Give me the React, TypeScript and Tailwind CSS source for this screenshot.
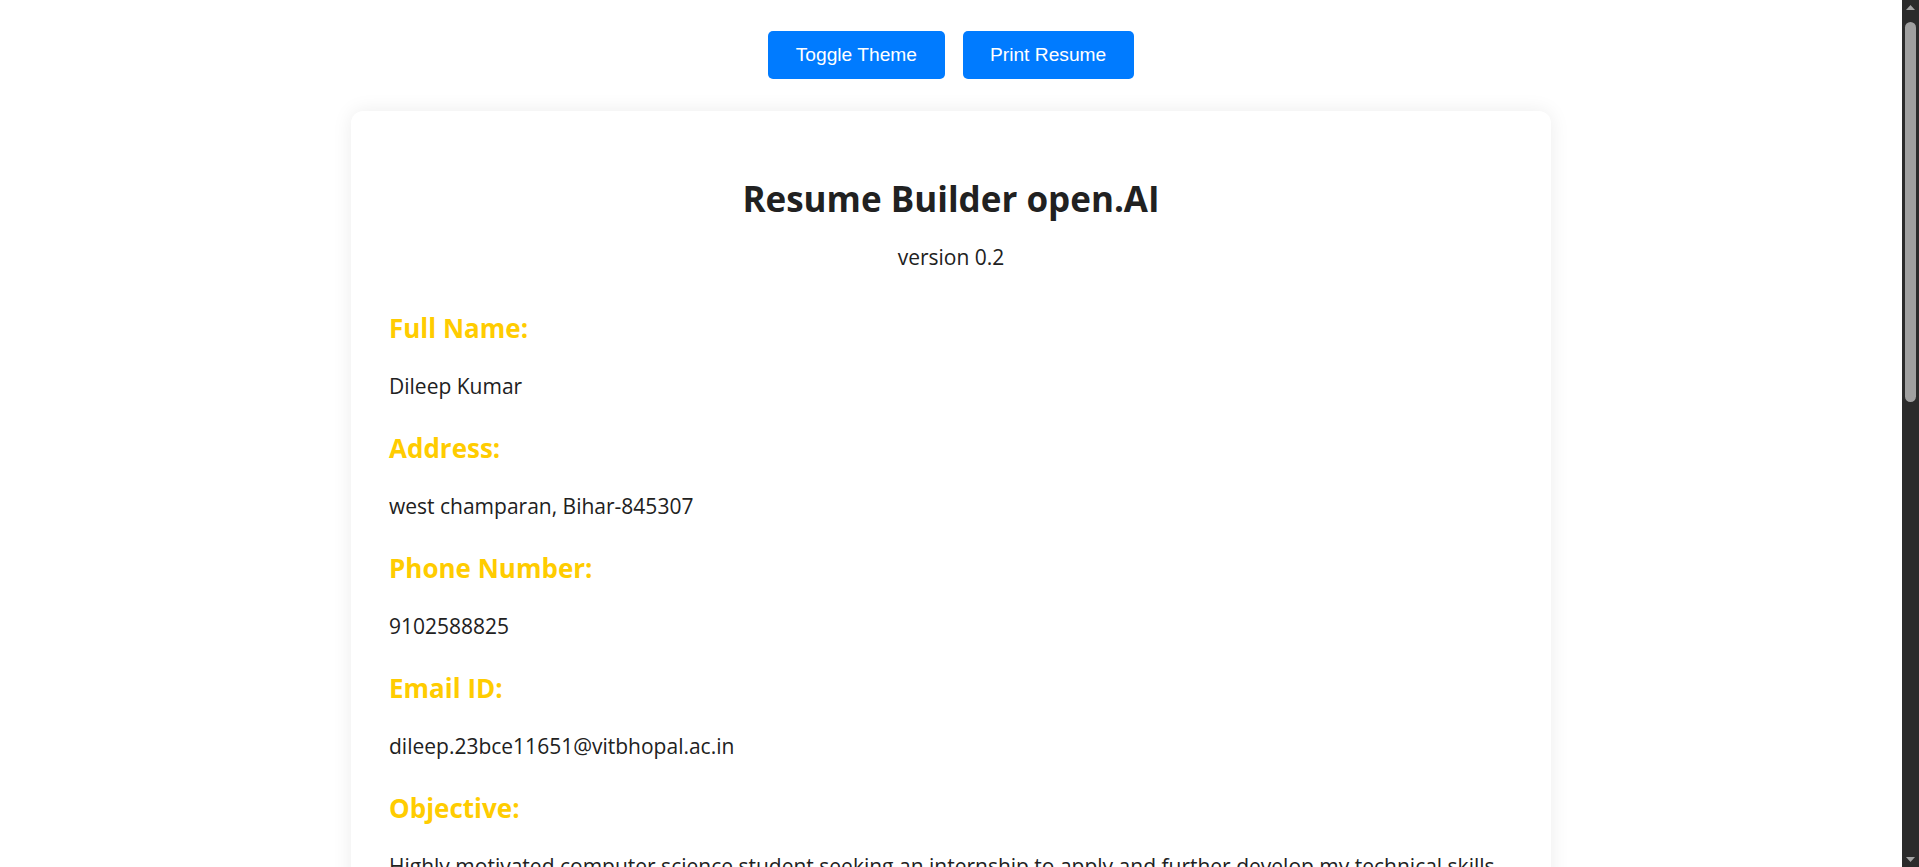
import React from "react";

const sections: { label: string; value: string }[] = [
  { label: "Full Name:", value: "Dileep Kumar" },
  { label: "Address:", value: "west champaran, Bihar-845307" },
  { label: "Phone Number:", value: "9102588825" },
  { label: "Email ID:", value: "dileep.23bce11651@vitbhopal.ac.in" },
  {
    label: "Objective:",
    value:
      "Highly motivated computer science student seeking an internship to apply and further develop my technical skills in a dynamic and challenging environment.",
  },
  {
    label: "Education:",
    value: "B.Tech in Computer Science and Engineering, VIT Bhopal University (2023 - 2027)",
  },
  { label: "Skills:", value: "C, C++, Java, Python, HTML, CSS, JavaScript, React" },
];

function ScrollStrip() {
  return (
    <div className="flex h-screen w-[17px] shrink-0 flex-col items-center bg-[#2b2b2b]">
      <svg width="17" height="17" viewBox="0 0 17 17" className="shrink-0">
        <polygon points="4,10 8.5,5 13,10" fill="#a3a3a3" />
      </svg>
      <div className="mt-[5px] h-[380px] w-[11px] rounded-[6px] bg-[#a0a0a0]" />
      <div className="flex-1" />
      <svg width="17" height="17" viewBox="0 0 17 17" className="shrink-0">
        <polygon points="4,7 13,7 8.5,12" fill="#a3a3a3" />
      </svg>
    </div>
  );
}

export default function App() {
  return (
    <div className="flex h-screen bg-white">
      <div className="h-screen flex-1 overflow-y-auto [scrollbar-width:none]">
        <div className="flex flex-col items-center pt-[31px] pb-[40px]">
          <div className="flex gap-[18px]">
            <button className="h-[48px] rounded-[5px] bg-[#007bff] px-[27.5px] text-[19.2px] text-white [font-family:'Liberation_Sans',Arial,sans-serif]">
              Toggle Theme
            </button>
            <button className="h-[48px] rounded-[5px] bg-[#007bff] px-[27.5px] text-[19.2px] text-white [font-family:'Liberation_Sans',Arial,sans-serif]">
              Print Resume
            </button>
          </div>
          <div className="mt-[32px] w-[1200px] rounded-[12px] bg-white px-[38px] pt-[68px] pb-[40px] text-[#212121] shadow-[0_0_20px_rgba(0,0,0,0.08)] [font-family:'Open_Sans','Noto_Sans',sans-serif]">
            <h1 className="text-center text-[35px] font-bold leading-[40.8px] text-[#212121]">
              Resume Builder open.AI
            </h1>
            <p className="mt-[23px] mb-[40px] text-center text-[21px] leading-[28px]">version 0.2</p>
            {sections.map((s) => (
              <div key={s.label}>
                <h2 className="mb-[27px] text-[26px] font-bold leading-[34px] text-[#ffcc00]">{s.label}</h2>
                <p className="mb-[31px] text-[21px] leading-[28px]">{s.value}</p>
              </div>
            ))}
          </div>
        </div>
      </div>
      <ScrollStrip />
    </div>
  );
}
